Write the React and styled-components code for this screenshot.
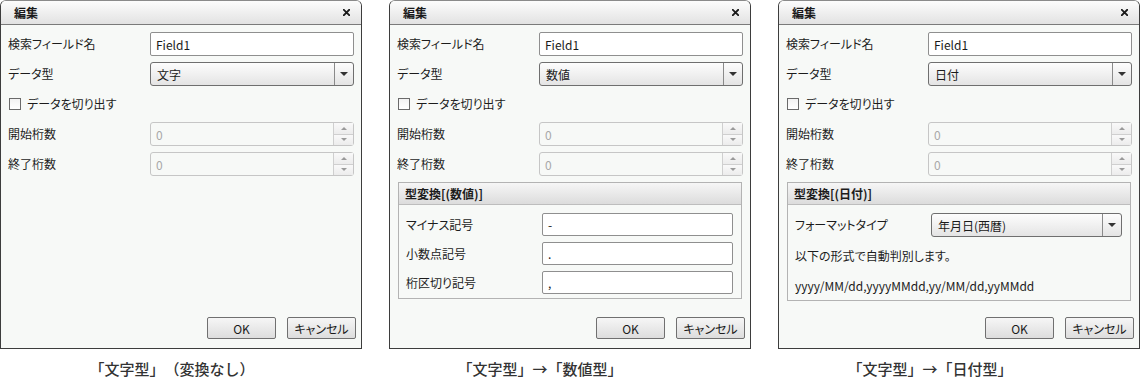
import React from "react";
import styled, { createGlobalStyle } from "styled-components";

const Global = createGlobalStyle`
  html, body { margin: 0; padding: 0; background: #ffffff; }
  body {
    font-family: "Noto Sans CJK JP", "Noto Sans", sans-serif;
    font-size: 12px;
    color: #1c1c1c;
    font-feature-settings: "palt";
  }
  * { box-sizing: border-box; }
`;

const Page = styled.div`
  display: flex;
  gap: 27px;
  width: 1141px;
  height: 378px;
  overflow: hidden;
`;

const Column = styled.div`
  display: flex;
  flex-direction: column;
  width: 362px;
`;

const Dialog = styled.div`
  display: flex;
  flex-direction: column;
  height: 352px;
  border: 1px solid #3d3d3d;
  border-top-color: #8a8a8a;
  border-radius: 6px 6px 0 0;
  background: #f7f9f7;
  overflow: hidden;
`;

const TitleBar = styled.div`
  display: flex;
  align-items: center;
  justify-content: space-between;
  height: 24px;
  padding: 0 11px 0 13px;
  background: linear-gradient(#fcfcfc, #e2e2e2);
  border-bottom: 1px solid #7a7a7a;
  flex: none;
`;

const Title = styled.span`
  font-weight: 700;
  font-size: 12px;
  color: #1a1a1a;
  line-height: 1;
`;

const Close = styled.svg`
  width: 7px;
  height: 7px;
  display: block;
`;

const Body = styled.div`
  flex: 1;
  display: flex;
  flex-direction: column;
  gap: 6px;
  padding: 7px 7px 0 7px;
`;

const Row = styled.div`
  display: grid;
  grid-template-columns: ${(p) => p.$label || 142}px 1fr;
  align-items: center;
  height: ${(p) => p.$h || 24}px;
`;

const Label = styled.span`
  color: #1c1c1c;
  white-space: nowrap;
  line-height: 1;
`;

const TextInput = styled.div`
  height: 100%;
  display: flex;
  align-items: center;
  padding-left: 5px;
  background: #ffffff;
  border: 1px solid #8f8f8f;
  border-radius: 2px;
  color: #1a1a1a;
`;

const Select = styled.div`
  height: 100%;
  display: flex;
  align-items: stretch;
  background: linear-gradient(#fdfdfd, #e4e4e4);
  border: 1px solid #6f6f6f;
  border-radius: 3px;
`;

const SelectValue = styled.div`
  flex: 1;
  display: flex;
  align-items: center;
  padding-left: 6px;
  color: #1a1a1a;
`;

const SelectArrow = styled.div`
  width: 19px;
  display: flex;
  align-items: center;
  justify-content: center;
  border-left: 1px solid #8a8a8a;
  &::after {
    content: "";
    border-left: 4px solid transparent;
    border-right: 4px solid transparent;
    border-top: 4px solid #333;
  }
`;

const CheckRow = styled.label`
  display: flex;
  align-items: center;
  gap: 6px;
  height: 24px;
  padding-left: 1px;
`;

const CheckBox = styled.span`
  width: 12px;
  height: 12px;
  border: 1px solid #6a6a6a;
  background: linear-gradient(#f2f2f2, #ffffff);
`;

const Spinner = styled.div`
  height: 100%;
  display: flex;
  border: 1px solid #c6c6c6;
  border-radius: 3px;
  background: #f7f9f7;
`;

const SpinValue = styled.div`
  flex: 1;
  display: flex;
  align-items: center;
  padding-left: 5px;
  color: #a8a8a8;
`;

const SpinButtons = styled.div`
  width: 20px;
  display: flex;
  flex-direction: column;
  border-left: 1px solid #cfcfcf;
`;

const SpinButton = styled.div`
  flex: 1;
  display: flex;
  align-items: center;
  justify-content: center;
  background: linear-gradient(#f9f9f9, #ececec);
  & + & { border-top: 1px solid #cfcfcf; }
  &::after {
    content: "";
    border-left: 3px solid transparent;
    border-right: 3px solid transparent;
    ${(p) => (p.$up ? "border-bottom: 3px solid #9a9a9a;" : "border-top: 3px solid #9a9a9a;")}
  }
`;

const Section = styled.div`
  margin: 0 1px 0 1px;
  border: 1px solid #b3b3b3;
  display: flex;
  flex-direction: column;
`;

const SectionHeader = styled.div`
  height: 22px;
  display: flex;
  align-items: center;
  padding-left: 6px;
  font-weight: 700;
  background: linear-gradient(#f6f6f6, #dcdcdc);
  border-bottom: 1px solid #bdbdbd;
`;

const SectionBody = styled.div`
  display: flex;
  flex-direction: column;
  gap: 6px;
  padding: 8px 8px 4px 7px;
`;

const Note = styled.div`
  line-height: 20px;
  margin-top: ${(p) => p.$mt || 0}px;
  color: #1c1c1c;
`;

const Footer = styled.div`
  display: flex;
  justify-content: flex-end;
  gap: 11px;
  padding: 0 5px 9px 0;
`;

const Button = styled.div`
  width: 69px;
  height: 22px;
  display: flex;
  align-items: center;
  justify-content: center;
  border: 1px solid #707070;
  border-radius: 2px;
  background: linear-gradient(#f6f6f6, #dddddd);
  color: #1a1a1a;
`;

const Caption = styled.div`
  margin-top: 11px;
  font-size: 15px;
  font-weight: 500;
  line-height: 18px;
  color: #333;
  text-align: center;
  padding-right: ${(p) => p.$shift}px;
  font-feature-settings: normal;
  text-spacing-trim: space-all;
  white-space: nowrap;
`;

const CloseIcon = () => (
  <Close viewBox="0 0 7 7">
    <path d="M0.8 0.8L6.2 6.2M6.2 0.8L0.8 6.2" stroke="#1a1a1a" strokeWidth="1.9" strokeLinecap="square" />
  </Close>
);

const Spin = () => (
  <Spinner>
    <SpinValue>0</SpinValue>
    <SpinButtons>
      <SpinButton $up />
      <SpinButton />
    </SpinButtons>
  </Spinner>
);

const Common = ({ type }) => (
  <>
    <Row>
      <Label>検索フィールド名</Label>
      <TextInput>Field1</TextInput>
    </Row>
    <Row>
      <Label>データ型</Label>
      <Select>
        <SelectValue>{type}</SelectValue>
        <SelectArrow />
      </Select>
    </Row>
    <CheckRow>
      <CheckBox />
      <Label>データを切り出す</Label>
    </CheckRow>
    <Row>
      <Label>開始桁数</Label>
      <Spin />
    </Row>
    <Row>
      <Label>終了桁数</Label>
      <Spin />
    </Row>
  </>
);

const EditDialog = ({ type, children, caption, shift }) => (
  <Column>
    <Dialog>
      <TitleBar>
        <Title>編集</Title>
        <CloseIcon />
      </TitleBar>
      <Body>
        <Common type={type} />
        {children}
      </Body>
      <Footer>
        <Button>OK</Button>
        <Button>キャンセル</Button>
      </Footer>
    </Dialog>
    <Caption $shift={shift}>{caption}</Caption>
  </Column>
);

export default function App() {
  return (
    <>
      <Global />
      <Page>
        <EditDialog type="文字" caption="「文字型」（変換なし）" shift={18} />
        <EditDialog type="数値" caption="「文字型」→「数値型」" shift={60}>
          <Section>
            <SectionHeader>型変換[(数値)]</SectionHeader>
            <SectionBody>
              <Row $label={136} $h={23}>
                <Label>マイナス記号</Label>
                <TextInput>-</TextInput>
              </Row>
              <Row $label={136} $h={23}>
                <Label>小数点記号</Label>
                <TextInput>.</TextInput>
              </Row>
              <Row $label={136} $h={23}>
                <Label>桁区切り記号</Label>
                <TextInput>,</TextInput>
              </Row>
            </SectionBody>
          </Section>
        </EditDialog>
        <EditDialog type="日付" caption="「文字型」→「日付型」" shift={58}>
          <Section>
            <SectionHeader>型変換[(日付)]</SectionHeader>
            <SectionBody>
              <Row $label={136}>
                <Label>フォーマットタイプ</Label>
                <Select>
                  <SelectValue>年月日(西暦)</SelectValue>
                  <SelectArrow />
                </Select>
              </Row>
              <Note $mt={3}>以下の形式で自動判別します。</Note>
              <Note $mt={4}>yyyy/MM/dd,yyyyMMdd,yy/MM/dd,yyMMdd</Note>
            </SectionBody>
          </Section>
        </EditDialog>
      </Page>
    </>
  );
}
